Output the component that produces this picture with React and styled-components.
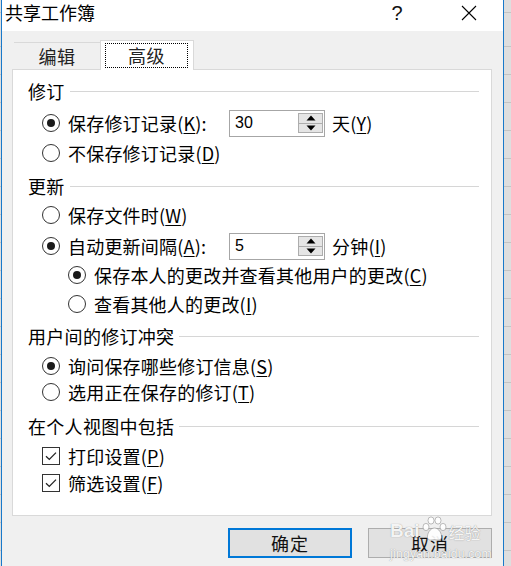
import React from 'react';
import styled, { createGlobalStyle } from 'styled-components';

const CJK = `"Noto Sans CJK SC", "Noto Sans", sans-serif`;

const Global = createGlobalStyle`
  html, body { margin: 0; padding: 0; }
  body {
    width: 511px;
    height: 566px;
    overflow: hidden;
    background-color: #dedede;
    background-image: repeating-linear-gradient(to bottom, transparent 0 27px, #c4c4c4 27px 28px);
    background-position: 0 19px;
    font-family: ${CJK};
    color: #000;
  }
`;

const Dialog = styled.div`
  box-sizing: border-box;
  width: 503px;
  height: 566px;
  margin-left: 1px;
  border-left: 1px solid #1979ca;
  border-right: 1px solid #1979ca;
  background: #f0f0f0;
  display: flex;
  flex-direction: column;
  position: relative;
  overflow: hidden;
`;

const TitleBar = styled.div`
  height: 31px;
  flex: none;
  background: #fff;
  display: flex;
  align-items: flex-start;
  padding: 1px 11px 0 3px;
  box-sizing: border-box;
`;

const Title = styled.div`
  flex: 1;
  font-size: 18px;
  line-height: 22px;
  letter-spacing: 0;
`;

const TitleButton = styled.div`
  width: 46px;
  height: 23px;
  display: flex;
  align-items: center;
  justify-content: center;
  margin-left: ${p => p.$ml || 0}px;
`;

const HelpGlyph = styled.span`
  font-family: "Liberation Sans", Arial, sans-serif;
  font-size: 20px;
  line-height: 1;
  color: #111;
`;

const Body = styled.div`
  flex: 1;
  padding: 9px 11px 0 10px;
  display: flex;
  flex-direction: column;
`;

const TabStrip = styled.div`
  height: 29px;
  display: flex;
  align-items: flex-end;
  padding-left: 2px;
  position: relative;
  z-index: 1;
`;

const Tab = styled.div`
  box-sizing: border-box;
  width: ${p => (p.$active ? 94 : 86)}px;
  height: ${p => (p.$active ? 30 : 27)}px;
  margin-bottom: ${p => (p.$active ? -1 : 0)}px;
  background: ${p => (p.$active ? '#fff' : 'transparent')};
  border-top: 1px solid #d9d9d9;
  border-left: ${p => (p.$active ? '1px solid #d9d9d9' : 'none')};
  border-right: ${p => (p.$active ? '1px solid #d9d9d9' : 'none')};
  display: flex;
  align-items: center;
  justify-content: center;
  padding: ${p => (p.$active ? '2px 5px 2px 4px' : '0')};
  font-size: 18px;
  letter-spacing: 0.6px;
  color: #222;
`;

const FocusRing = styled.div`
  flex: 1;
  align-self: stretch;
  border: 1px dotted #000;
  display: flex;
  align-items: center;
  justify-content: center;
  padding-bottom: 1px;
`;

const Panel = styled.div`
  box-sizing: border-box;
  height: 447px;
  flex: none;
  background: #fff;
  border: 1px solid #d9d9d9;
  padding: 8px 12px 0 15px;
  display: flex;
  flex-direction: column;
`;

const Heading = styled.div`
  height: 26px;
  margin-top: ${p => p.$mt || 0}px;
  display: flex;
  align-items: center;
  gap: 5px;
  font-size: 18px;
  letter-spacing: 0.3px;
  white-space: nowrap;
`;

const Rule = styled.div`
  flex: 1;
  height: 1px;
  background: #d6d6d6;
  margin-top: 1px;
`;

const Row = styled.div`
  height: 26px;
  margin-top: ${p => p.$mt || 0}px;
  padding-left: ${p => p.$indent}px;
  display: flex;
  align-items: center;
  font-size: 18px;
  letter-spacing: 0.2px;
  white-space: nowrap;
`;

const Radio = styled.span`
  box-sizing: border-box;
  width: 18px;
  height: 18px;
  flex: none;
  border: 1px solid #333;
  border-radius: 50%;
  display: flex;
  align-items: center;
  justify-content: center;
  margin-right: 8px;
  &::after {
    content: '';
    width: 8px;
    height: 8px;
    border-radius: 50%;
    background: #1a1a1a;
    display: ${p => (p.$checked ? 'block' : 'none')};
  }
`;

const Check = styled.span`
  box-sizing: border-box;
  width: 18px;
  height: 18px;
  flex: none;
  border: 1px solid #333;
  display: flex;
  align-items: center;
  justify-content: center;
  margin-right: 8px;
`;

const Label = styled.span`
  width: ${p => (p.$w ? `${p.$w}px` : 'auto')};
  flex: none;
`;

const U = styled.span`
  text-decoration: underline;
  text-underline-offset: 2px;
`;

const Spinner = styled.div`
  box-sizing: border-box;
  width: 96px;
  height: 27px;
  border: 1px solid #a6a6a6;
  background: #fff;
  display: flex;
  align-items: center;
  padding: 0 1px 0 5px;
  flex: none;
`;

const SpinValue = styled.span`
  flex: 1;
  font-family: "Liberation Sans", Arial, sans-serif;
  font-size: 16px;
  letter-spacing: 0;
`;

const SpinButtons = styled.div`
  width: 25px;
  height: 20px;
  display: flex;
  flex-direction: column;
`;

const SpinButton = styled.div`
  box-sizing: border-box;
  flex: 1;
  background: #e5e5e5;
  border: 1px solid #adadad;
  margin-top: ${p => (p.$down ? -1 : 0)}px;
  display: flex;
  align-items: center;
  justify-content: center;
`;

const Unit = styled.span`
  margin-left: 7px;
`;

const Footer = styled.div`
  display: flex;
  justify-content: flex-end;
  gap: 16px;
  margin-top: 12px;
`;

const Button = styled.div`
  box-sizing: border-box;
  width: 124px;
  height: 30px;
  background: #e1e1e1;
  border: ${p => (p.$primary ? '2px solid #0078d7' : '1px solid #adadad')};
  display: flex;
  align-items: center;
  justify-content: center;
  font-size: 18px;
  letter-spacing: 1px;
  color: #111;
`;

const Watermark = styled.div`
  position: absolute;
  left: 388px;
  top: 514px;
  width: 100px;
  display: flex;
  flex-direction: column;
  align-items: flex-start;
  color: rgba(255, 255, 255, 0.92);
  text-shadow: 0 0 1px rgba(110, 110, 110, 0.8);
  pointer-events: none;
`;

const WmTop = styled.div`
  display: flex;
  align-items: flex-end;
  height: 26px;
  font-family: "Liberation Sans", Arial, sans-serif;
  font-size: 19px;
  font-weight: bold;
  line-height: 1;
`;

const WmCjk = styled.span`
  font-family: ${CJK};
  font-size: 16px;
  font-weight: normal;
  margin-left: 1px;
`;

const WmUrl = styled.div`
  font-family: "Liberation Sans", Arial, sans-serif;
  font-size: 12px;
  margin-top: 7px;
  letter-spacing: 0.3px;
`;

const SpinArrow = ({ up }) => (
  <svg width="10" height="6" viewBox="0 0 10 6">
    <path d={up ? 'M5 0.5 L9.5 5.5 L0.5 5.5 Z' : 'M0.5 0.5 L9.5 0.5 L5 5.5 Z'} fill="#000" />
  </svg>
);

const NumberBox = ({ value }) => (
  <Spinner>
    <SpinValue>{value}</SpinValue>
    <SpinButtons>
      <SpinButton><SpinArrow up /></SpinButton>
      <SpinButton $down><SpinArrow /></SpinButton>
    </SpinButtons>
  </Spinner>
);

const CheckMark = () => (
  <svg width="14" height="14" viewBox="0 0 14 14">
    <path d="M2 7.2 L5.3 10.4 L12 3.6" fill="none" stroke="#222" strokeWidth="1.3" />
  </svg>
);

const Paw = () => (
  <svg width="26" height="26" viewBox="0 0 26 26" style={{ margin: '0 1px -2px 1px' }}>
    <g fill="rgba(255,255,255,0.92)" stroke="rgba(120,120,120,0.6)" strokeWidth="0.8">
      <ellipse cx="5" cy="11" rx="3" ry="3.6" />
      <ellipse cx="10" cy="4.5" rx="3" ry="3.6" />
      <ellipse cx="17" cy="4.5" rx="3" ry="3.6" />
      <ellipse cx="22" cy="11" rx="3" ry="3.6" />
      <path d="M13.5 12 C9 12 6 18 6.5 21.5 C7 25 11 24 13.5 23.5 C16 24 20 25 20.5 21.5 C21 18 18 12 13.5 12 Z" />
    </g>
  </svg>
);

export default function App() {
  return (
    <>
      <Global />
      <Dialog>
        <TitleBar>
          <Title>共享工作簿</Title>
          <TitleButton><HelpGlyph>?</HelpGlyph></TitleButton>
          <TitleButton $ml={26}>
            <svg width="16" height="16" viewBox="0 0 16 16">
              <path d="M1 1 L15 15 M15 1 L1 15" stroke="#000" strokeWidth="1.1" />
            </svg>
          </TitleButton>
        </TitleBar>
        <Body>
          <TabStrip>
            <Tab>编辑</Tab>
            <Tab $active><FocusRing>高级</FocusRing></Tab>
          </TabStrip>
          <Panel>
            <Heading>修订<Rule /></Heading>
            <Row $indent={14} $mt={6}>
              <Radio $checked />
              <Label $w={161}>保存修订记录(<U>K</U>):</Label>
              <NumberBox value="30" />
              <Unit>天(<U>Y</U>)</Unit>
            </Row>
            <Row $indent={14} $mt={4}>
              <Radio />
              <Label>不保存修订记录(<U>D</U>)</Label>
            </Row>

            <Heading $mt={7}>更新<Rule /></Heading>
            <Row $indent={14} $mt={3}>
              <Radio />
              <Label>保存文件时(<U>W</U>)</Label>
            </Row>
            <Row $indent={14} $mt={5}>
              <Radio $checked />
              <Label $w={161}>自动更新间隔(<U>A</U>):</Label>
              <NumberBox value="5" />
              <Unit>分钟(<U>I</U>)</Unit>
            </Row>
            <Row $indent={40} $mt={3}>
              <Radio $checked />
              <Label>保存本人的更改并查看其他用户的更改(<U>C</U>)</Label>
            </Row>
            <Row $indent={40} $mt={3}>
              <Radio />
              <Label>查看其他人的更改(<U>I</U>)</Label>
            </Row>

            <Heading $mt={6}>用户间的修订冲突<Rule /></Heading>
            <Row $indent={14} $mt={4}>
              <Radio $checked />
              <Label>询问保存哪些修订信息(<U>S</U>)</Label>
            </Row>
            <Row $indent={14} $mt={0}>
              <Radio />
              <Label>选用正在保存的修订(<U>T</U>)</Label>
            </Row>

            <Heading $mt={8}>在个人视图中包括<Rule /></Heading>
            <Row $indent={14} $mt={4}>
              <Check><CheckMark /></Check>
              <Label>打印设置(<U>P</U>)</Label>
            </Row>
            <Row $indent={14} $mt={1}>
              <Check><CheckMark /></Check>
              <Label>筛选设置(<U>F</U>)</Label>
            </Row>
          </Panel>
          <Footer>
            <Button $primary>确定</Button>
            <Button>取消</Button>
          </Footer>
        </Body>
        <Watermark>
          <WmTop>Bai<Paw /><WmCjk>经验</WmCjk></WmTop>
          <WmUrl>jingyan.baidu.com</WmUrl>
        </Watermark>
      </Dialog>
    </>
  );
}
